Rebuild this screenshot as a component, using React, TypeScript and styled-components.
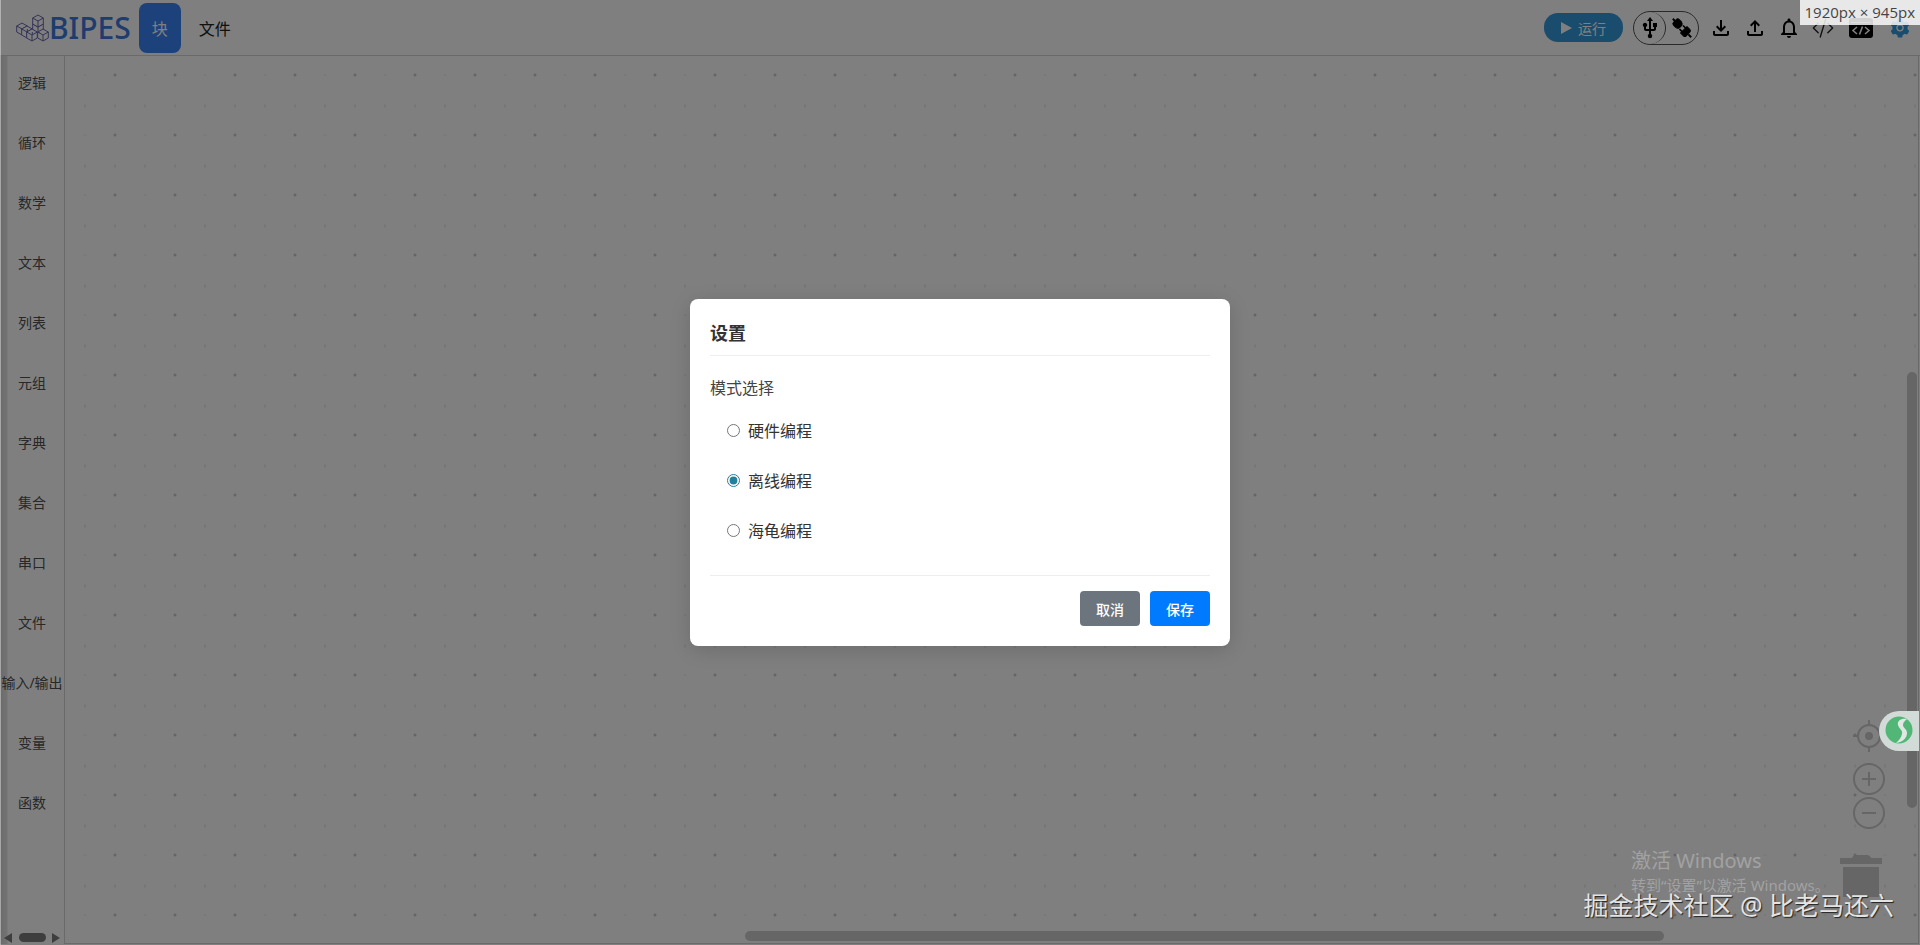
import React, { useState } from "react";
import styled, { createGlobalStyle } from "styled-components";
import { MdUsb, MdOutlineFileDownload, MdOutlineFileUpload, MdNotificationsNone } from "react-icons/md";
import { BsCodeSlash } from "react-icons/bs";
import { AiFillSetting } from "react-icons/ai";

const GlobalStyle = createGlobalStyle`
  *, *::before, *::after { box-sizing: border-box; }
  body {
    margin: 0;
    background: #fff;
    color: #333;
    font-family: "Noto Sans", "Noto Sans CJK SC", sans-serif;
    font-size: 16px;
  }
  button { font-family: inherit; cursor: pointer; }
`;

const Page = styled.div`
  position: relative;
  display: flex;
  flex-direction: column;
  min-height: 100vh;
  overflow: hidden;
`;

const Header = styled.header`
  display: flex;
  align-items: center;
  height: 56px;
  padding: 0 8px 0 16px;
  border-bottom: 1px solid #d4d4d4;
`;

const Brand = styled.a`
  display: flex;
  align-items: center;
  color: #3c78dc;
  font-size: 30px;
  font-weight: 500;
  line-height: 48px;
  text-decoration: none;
`;

const Nav = styled.nav`
  display: flex;
  flex: 1;
  gap: 2px;
  margin-left: 8px;
`;

const NavTab = styled.button<{ $active?: boolean }>`
  height: 50px;
  padding: 0 ${(p) => (p.$active ? "13px" : "16px")};
  border: 0;
  border-radius: 8px;
  background: ${(p) => (p.$active ? "#3b82f6" : "transparent")};
  color: ${(p) => (p.$active ? "#fff" : "#222")};
  font-size: 16px;
`;

const Tools = styled.div`
  display: flex;
  align-items: center;
  gap: 10px;
`;

const RunButton = styled.button`
  display: flex;
  align-items: center;
  justify-content: center;
  gap: 6px;
  width: 79px;
  height: 29px;
  border: 0;
  border-radius: 14px;
  background: #3498db;
  color: #fff;
  font-size: 14px;
`;

const LinkGroup = styled.div`
  display: flex;
  height: 34px;
  border: 1px solid #555;
  border-radius: 17px;
`;

const LinkButton = styled.button<{ $divided?: boolean }>`
  display: flex;
  align-items: center;
  justify-content: center;
  width: 32px;
  padding: 0;
  border: 0;
  border-right: ${(p) => (p.$divided ? "1px solid #555" : "0")};
  border-radius: 16px;
  background: transparent;
  color: #000;
`;

const IconButton = styled.button<{ $tone?: string }>`
  display: flex;
  align-items: center;
  justify-content: center;
  width: 24px;
  height: 24px;
  padding: 0;
  border: 0;
  background: transparent;
  color: ${(p) => p.$tone ?? "#000"};
`;

const EditTools = styled(Tools)`
  margin-right: 4px;
`;

const CodeTools = styled(Tools)`
  gap: 15px;
`;

const Main = styled.main`
  display: flex;
  flex: 1;
  padding: 0 1px 1px 0;
`;

const Sidebar = styled.aside`
  display: flex;
  flex-direction: column;
  width: 65px;
  border-right: 1px solid #d4d4d4;
  background: linear-gradient(90deg, #d8d8d8 0, #e6e6e6 7px, #fff 8px);
`;

const Categories = styled.ul`
  display: flex;
  flex: 1;
  flex-direction: column;
  gap: 6px;
  margin: 0;
  padding: 0;
  list-style: none;
`;

const Category = styled.button`
  width: 64px;
  height: 54px;
  padding: 0 0 3px;
  border: 0;
  background: transparent;
  color: #505050;
  font-size: 14px;
  white-space: nowrap;
`;

const SideScroll = styled.div`
  display: flex;
  align-items: center;
  justify-content: space-between;
  height: 13px;
  padding: 0 4px;
`;

const SideThumb = styled.div`
  width: 27px;
  height: 9px;
  border-radius: 5px;
  background: #7c7c7c;
`;

const Canvas = styled.section`
  position: relative;
  flex: 1;
  border-right: 1px solid #d4d4d4;
  border-bottom: 1px solid #d4d4d4;
  background-image:
    radial-gradient(circle at 50px 19px, #b8b8b8 0, #d4d4d4 1px, transparent 2px),
    radial-gradient(ellipse 2px 1px at 20px 19px, #e4e4e4 0, transparent 100%),
    radial-gradient(ellipse 1px 3px at 20px 50px, #dcdcdc 0, transparent 100%),
    radial-gradient(ellipse 1px 3px at 50px 50px, #dcdcdc 0, transparent 100%);
  background-size: 60px 60px;
`;

const ScrollThumb = styled.div<{ $vertical?: boolean }>`
  position: absolute;
  border-radius: 5px;
  background: #ccc;
  ${(p) =>
    p.$vertical
      ? "top: 35.6%; right: 1px; width: 10px; height: 49.2%;"
      : "left: 36.7%; bottom: 2px; width: 49.6%; height: 10px;"}
`;

const CanvasControls = styled.div`
  position: absolute;
  right: 33px;
  bottom: 46px;
  display: flex;
  flex-direction: column;
  align-items: flex-end;
  color: #ccc;
`;

const ControlButton = styled.button<{ $gap: number }>`
  display: flex;
  margin: 0 0 ${(p) => p.$gap}px;
  padding: 0;
  border: 0;
  background: transparent;
  color: inherit;
`;

const TrashButton = styled(ControlButton)`
  margin-right: 3px;
`;

const Overlay = styled.div`
  position: absolute;
  inset: 0;
  display: flex;
  align-items: center;
  justify-content: center;
  background: linear-gradient(90deg, rgba(255, 255, 255, 0.4) 1px, transparent 1px), rgba(0, 0, 0, 0.5);
`;

const Dialog = styled.form`
  width: 540px;
  max-width: 100%;
  padding: 20px;
  border-radius: 8px;
  background: #fff;
  box-shadow: 0 4px 20px rgba(0, 0, 0, 0.15);
`;

const DialogTitle = styled.h2`
  margin: 0 0 18px;
  padding-bottom: 8px;
  border-bottom: 1px solid #eee;
  font-size: 18px;
  line-height: 28px;
`;

const ModeGroup = styled.fieldset`
  margin: 0;
  padding: 0;
  border: 0;
`;

const ModeLegend = styled.legend`
  padding: 0;
  color: #444;
  line-height: 28px;
`;

const ModeList = styled.div`
  display: flex;
  flex-direction: column;
  gap: 20px;
  padding-top: 13px;
`;

const ModeOption = styled.label`
  display: flex;
  align-items: center;
  gap: 8px;
  height: 30px;
  padding-left: 17px;
`;

const ModeRadio = styled.input`
  width: 13px;
  height: 13px;
  margin: 0;
  accent-color: #23809a;
`;

const DialogActions = styled.div`
  display: flex;
  justify-content: flex-end;
  gap: 10px;
  margin-top: 30px;
  padding-top: 15px;
  border-top: 1px solid #eee;
`;

const ActionButton = styled.button<{ $primary?: boolean }>`
  width: 60px;
  height: 35px;
  border: 0;
  border-radius: 4px;
  background: ${(p) => (p.$primary ? "#007bff" : "#6c757d")};
  color: #fff;
  font-size: 14px;
  font-weight: 500;
`;

const SizeTag = styled.output`
  position: absolute;
  top: 0;
  right: 0;
  padding: 0 5px;
  background: rgba(255, 255, 255, 0.82);
  color: #444;
  font-family: "Open Sans", sans-serif;
  font-size: 15px;
  line-height: 25px;
`;

const FloatingBadge = styled.button`
  position: absolute;
  right: 1px;
  bottom: 194px;
  width: 40px;
  height: 40px;
  padding: 5px 6px;
  border: 0;
  border-radius: 20px 0 0 20px;
  background: #d2dbd7;
`;

const ActivationNote = styled.div`
  position: absolute;
  right: 92px;
  bottom: 51px;
  width: 197px;
  color: #a2a2a2;
  font-size: 15px;
  line-height: 18px;
  white-space: nowrap;
`;

const ActivationTitle = styled.div`
  font-size: 20px;
  line-height: 30px;
`;

const Credit = styled.div`
  position: absolute;
  right: 26px;
  bottom: 27px;
  color: #e4e4e4;
  font-size: 25px;
  line-height: 26px;
  text-shadow: 1px 1px 1px #222;
  white-space: nowrap;
`;

const cubes = [
  [22, 13],
  [22, 7],
  [6, 15],
  [11, 18],
  [16, 21],
  [27, 21],
];

const CubeLogo = () => (
  <svg width="33" height="28" viewBox="0 0 33 28" aria-hidden="true">
    <g fill="#fff" stroke="#6a66b0" strokeWidth="1" strokeLinejoin="round">
      {cubes.map(([x, y]) => (
        <path
          key={`${x}-${y}`}
          d={`M${x} ${y - 6}l5.300 3v6l-5.300 3-5.300-3v-6zM${x - 5.3} ${y - 3}l5.300 3 5.300-3M${x} ${y}v6`}
        />
      ))}
    </g>
  </svg>
);

const PlugIcon = () => (
  <svg width="22" height="22" viewBox="0 0 22 22" aria-hidden="true">
    <g transform="rotate(45 11 11)" fill="currentColor" stroke="currentColor">
      <path d="M-2 11h4M20 11h4" strokeWidth="2" />
      <path d="M3 7h3a4 4 0 0 1 3 2v4a4 4 0 0 1-3 2H3a2 2 0 0 1-2-2V9a2 2 0 0 1 2-2z" />
      <path d="M13.500 6.500h4a2 2 0 0 1 2 2v5a2 2 0 0 1-2 2h-4z" />
      <path d="M10 8.500h4M10 13.500h4" strokeWidth="1.600" />
    </g>
  </svg>
);

const CodeBlockIcon = () => (
  <svg width="24" height="20" viewBox="0 0 24 20" aria-hidden="true">
    <rect width="24" height="20" rx="3" fill="currentColor" />
    <path d="M2 4.500h20" stroke="#999" />
    <path d="M8 9l-4 3.500L8 16M16 9l4 3.500L16 16M13.500 8.500l-3 8" fill="none" stroke="#fff" strokeWidth="1.600" />
  </svg>
);

const TargetIcon = () => (
  <svg width="32" height="32" viewBox="0 0 32 32" aria-hidden="true">
    <circle cx="16" cy="16" r="11" fill="none" stroke="currentColor" strokeWidth="2" />
    <circle cx="16" cy="16" r="4" fill="currentColor" />
    <path d="M16 0v5M16 27v5M0 16h5M27 16h5" stroke="currentColor" strokeWidth="2" />
  </svg>
);

const ZoomIcon = ({ plus }: { plus?: boolean }) => (
  <svg width="32" height="32" viewBox="0 0 32 32" aria-hidden="true">
    <circle cx="16" cy="16" r="15" fill="none" stroke="currentColor" strokeWidth="2" />
    <path d={plus ? "M9 16h14M16 9v14" : "M9 16h14"} stroke="currentColor" strokeWidth="2" />
  </svg>
);

const TrashIcon = () => (
  <svg width="42" height="42" viewBox="0 0 42 42" fill="currentColor" aria-hidden="true">
    <path d="M0 3h12q1-3 4-3h11q3 0 4 3h11v6H0zM3 12h36v30H3z" />
  </svg>
);

const Arrow = ({ left }: { left?: boolean }) => (
  <svg width="8" height="10" viewBox="0 0 8 10" aria-hidden="true">
    <path d={left ? "M8 0v10L0 5z" : "M0 0v10l8-5z"} fill="#7c7c7c" />
  </svg>
);

const categories = ["逻辑", "循环", "数学", "文本", "列表", "元组", "字典", "集合", "串口", "文件", "输入/输出", "变量", "函数"];
const modes = ["硬件编程", "离线编程", "海龟编程"];

export default function App() {
  const [mode, setMode] = useState("离线编程");
  return (
    <Page>
      <GlobalStyle />
      <Header>
        <Brand href="#">
          <CubeLogo />
          BIPES
        </Brand>
        <Nav>
          <NavTab $active>块</NavTab>
          <NavTab>文件</NavTab>
        </Nav>
        <Tools>
          <RunButton>
            <svg width="11" height="12" viewBox="0 0 11 12" aria-hidden="true">
              <path d="M0 0v12l11-6z" fill="#fff" />
            </svg>
            运行
          </RunButton>
          <LinkGroup>
            <LinkButton $divided aria-label="USB"><MdUsb size={24} /></LinkButton>
            <LinkButton aria-label="连接"><PlugIcon /></LinkButton>
          </LinkGroup>
          <EditTools>
            <IconButton aria-label="下载"><MdOutlineFileDownload size={24} /></IconButton>
            <IconButton aria-label="上传"><MdOutlineFileUpload size={24} /></IconButton>
            <IconButton aria-label="通知"><MdNotificationsNone size={24} /></IconButton>
            <IconButton aria-label="代码" $tone="#222"><BsCodeSlash size={22} /></IconButton>
          </EditTools>
          <CodeTools>
            <IconButton aria-label="代码块"><CodeBlockIcon /></IconButton>
            <IconButton aria-label="设置" $tone="#3498db"><AiFillSetting size={22} /></IconButton>
          </CodeTools>
        </Tools>
      </Header>
      <Main>
        <Sidebar>
          <Categories>
            {categories.map((name) => (
              <li key={name}><Category>{name}</Category></li>
            ))}
          </Categories>
          <SideScroll>
            <Arrow left />
            <SideThumb />
            <Arrow />
          </SideScroll>
        </Sidebar>
        <Canvas>
          <ScrollThumb $vertical />
          <ScrollThumb />
          <CanvasControls>
            <ControlButton $gap={11} aria-label="居中"><TargetIcon /></ControlButton>
            <ControlButton $gap={2} aria-label="放大"><ZoomIcon plus /></ControlButton>
            <ControlButton $gap={26} aria-label="缩小"><ZoomIcon /></ControlButton>
            <TrashButton $gap={0} aria-label="删除"><TrashIcon /></TrashButton>
          </CanvasControls>
        </Canvas>
      </Main>
      <Overlay>
        <Dialog role="dialog" aria-labelledby="settings-title" onSubmit={(e) => e.preventDefault()}>
          <DialogTitle id="settings-title">设置</DialogTitle>
          <ModeGroup>
            <ModeLegend>模式选择</ModeLegend>
            <ModeList>
              {modes.map((name) => (
                <ModeOption key={name}>
                  <ModeRadio type="radio" name="mode" checked={mode === name} onChange={() => setMode(name)} />
                  {name}
                </ModeOption>
              ))}
            </ModeList>
          </ModeGroup>
          <DialogActions>
            <ActionButton type="button">取消</ActionButton>
            <ActionButton type="submit" $primary>保存</ActionButton>
          </DialogActions>
        </Dialog>
      </Overlay>
      <FloatingBadge aria-label="助手">
        <svg width="28" height="28" viewBox="0 0 28 28" aria-hidden="true">
          <circle cx="14" cy="14" r="13.500" fill="#52b677" />
          <path d="M22 3c-6-1-10 2-9 6 1 4 5 5 4 9-1 4-3 6-6 9 7-1 11-5 11-10 0-4-4-5-4-8 0-3 2-4 4-6z" fill="#e0e8e4" />
        </svg>
      </FloatingBadge>
      <ActivationNote>
        <ActivationTitle>激活 Windows</ActivationTitle>
        转到“设置”以激活 Windows。
      </ActivationNote>
      <Credit>掘金技术社区 @ 比老马还六</Credit>
      <SizeTag>1920px × 945px</SizeTag>
    </Page>
  );
}
